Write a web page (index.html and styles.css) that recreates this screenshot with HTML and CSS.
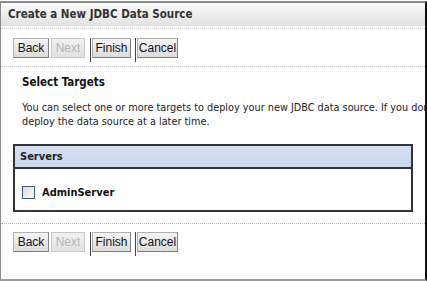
FILE: index.html
```html
<!DOCTYPE html>
<html lang="en">
<head>
    <meta charset="UTF-8">
    <title>Create a New JDBC Data Source</title>
    <link rel="stylesheet" href="styles.css">
</head>
<body>
    <div class="frame">
        <div class="title-bar">Create a New JDBC Data Source</div>
        <div class="button-bar top">
            <button class="btn back">Back</button>
            <button class="btn next" disabled>Next</button>
            <span class="sep"></span>
            <button class="btn finish">Finish</button>
            <span class="sep"></span>
            <button class="btn cancel">Cancel</button>
        </div>
        <div class="content">
            <h2>Select Targets</h2>
            <p>You can select one or more targets to deploy your new JDBC data source. If you don't want to deploy the data source at this time, you can<br>deploy the data source at a later time.</p>
            <table class="servers">
                <tr><th>Servers</th></tr>
                <tr>
                    <td>
                        <label class="server"><span class="check"></span>AdminServer</label>
                    </td>
                </tr>
            </table>
        </div>
        <div class="button-bar bottom">
            <button class="btn back">Back</button>
            <button class="btn next" disabled>Next</button>
            <span class="sep"></span>
            <button class="btn finish">Finish</button>
            <span class="sep"></span>
            <button class="btn cancel">Cancel</button>
        </div>
    </div>
</body>
</html>
```

FILE: styles.css
```css
html, body {
    margin: 0;
    padding: 0;
    background: #fff;
}
body {
    font-family: "DejaVu Sans Condensed", "DejaVu Sans", sans-serif;
    font-size: 11px;
    color: #000;
    padding-top: 1px;
}
.frame {
    box-sizing: border-box;
    height: 280px;
    width: 427px;
    border-top: 2px solid #8a8a8a;
    border-left: 1px solid #8a8a8a;
    border-right: 2px solid #111;
    border-bottom: 2px solid #9a9a9a;
    overflow: hidden;
}
.title-bar {
    height: 23px;
    line-height: 22px;
    padding-left: 7px;
    font-weight: bold;
    font-size: 11.5px;
    color: #333;
    background: linear-gradient(#f9f9f9, #e2e2e2);
    white-space: nowrap;
}
.button-bar {
    display: flex;
    align-items: flex-start;
    padding-left: 12px;
}
.button-bar.top {
    margin-top: 2px;
    border-top: 1px dotted #c8c8c8;
    padding-top: 9px;
    height: 28px;
    border-bottom: 1px dotted #c8c8c8;
}
.button-bar.bottom {
    margin-top: 11px;
    border-top: 1px dotted #b8b8b8;
    padding-top: 8px;
}
.btn {
    box-sizing: border-box;
    height: 20px;
    padding: 0;
    margin-right: 2px;
    font-family: "Liberation Sans", Arial, sans-serif;
    font-size: 12px;
    color: #111;
    background: linear-gradient(#f4f4f4, #dcdcdc);
    border: 1px solid #b0b0b0;
    border-right-color: #808080;
    border-bottom-color: #808080;
    border-radius: 0;
}
.btn.back { width: 36px; }
.btn.next { width: 34px; margin-right: 3px; }
.btn.finish { width: 39px; }
.btn.cancel { width: 41px; }
.btn[disabled] {
    color: #b5b5b5;
    background: linear-gradient(#f0f0f0, #e2e2e2);
    border-color: #c8c8c8;
}
.sep {
    width: 1px;
    height: 24px;
    background: #444;
    margin: 0 1px 0 2px;
}
.content {
    padding: 0 12px 0 12px;
}
h2 {
    margin: 8px 0 0 9px;
    font-size: 11.5px;
    font-weight: bold;
    color: #111;
    line-height: 15px;
}
p {
    margin: 11px 0 0 9px;
    width: 700px;
    line-height: 14px;
    font-size: 10.8px;
    color: #222;
    white-space: nowrap;
}
.servers {
    margin-top: 15px;
    width: 400px;
    border-collapse: collapse;
    border: 2px solid #333;
}
.servers th {
    height: 21px;
    padding: 0 0 0 5px;
    text-align: left;
    font-size: 11px;
    color: #222;
    background: linear-gradient(#d6e0f2, #c8d6ec);
    border-bottom: 2px solid #333;
}
.servers td {
    height: 36px;
    padding: 5px 0 0 7px;
}
.server {
    display: flex;
    align-items: center;
    font-weight: bold;
    color: #111;
}
.check {
    box-sizing: border-box;
    width: 13px;
    height: 13px;
    margin-right: 7px;
    border: 1px solid #3c5a7a;
    background: linear-gradient(135deg, #dcdcdc, #fafafa);
}
```
